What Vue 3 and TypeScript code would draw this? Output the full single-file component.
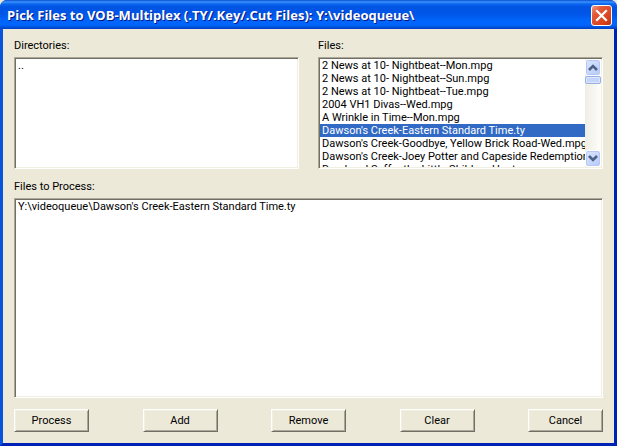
<script setup lang="ts">
import { ref } from 'vue'

const path = 'Y:\\videoqueue\\'
const directories = ['..']
const files = [
  '2 News at 10- Nightbeat--Mon.mpg',
  '2 News at 10- Nightbeat--Sun.mpg',
  '2 News at 10- Nightbeat--Tue.mpg',
  '2004 VH1 Divas--Wed.mpg',
  'A Wrinkle in Time--Mon.mpg',
  "Dawson's Creek-Eastern Standard Time.ty",
  "Dawson's Creek-Goodbye, Yellow Brick Road-Wed.mpg",
  "Dawson's Creek-Joey Potter and Capeside Redemption",
  'Dead and Suffer the Little Children-Hunt.mpg',
]
const selectedDirs = ref<string[]>([])
const selectedFiles = ref<string[]>([files[5]])
const selectedQueue = ref<string[]>([])
const queue = ref<string[]>([path + files[5]])

function add(): void {
  for (const name of selectedFiles.value) {
    if (!queue.value.includes(path + name)) queue.value.push(path + name)
  }
}
function remove(): void {
  queue.value = queue.value.filter((f) => !selectedQueue.value.includes(f))
}
function clear(): void {
  queue.value = []
}

const fileList = ref<HTMLSelectElement | null>(null)
function scrollFiles(rows: number): void {
  fileList.value?.scrollBy(0, rows * 13)
}
</script>

<template>
  <div class="window">
    <header class="titlebar">
      <h1 class="title">Pick Files to VOB-Multiplex (.TY/.Key/.Cut Files): {{ path }}</h1>
      <button class="close" type="button" aria-label="Close">
        <svg viewBox="0 0 21 21" width="21" height="21">
          <defs>
            <linearGradient id="closeFill" x1="0" y1="0" x2="1" y2="1">
              <stop offset="0" stop-color="#f0a088" />
              <stop offset="0.3" stop-color="#e2593a" />
              <stop offset="0.75" stop-color="#d9401a" />
              <stop offset="1" stop-color="#b03010" />
            </linearGradient>
          </defs>
          <rect x="0.5" y="0.5" width="20" height="20" rx="2.5" fill="url(#closeFill)" stroke="#fff" />
          <path d="M6 6 L15 15 M15 6 L6 15" stroke="#fff" stroke-width="2.2" stroke-linecap="square" />
        </svg>
      </button>
    </header>

    <main class="body">
      <div class="pickers">
        <section class="field">
          <label class="label" for="dirs">Directories:</label>
          <div class="sunken">
            <select id="dirs" v-model="selectedDirs" class="list" size="8" multiple>
              <option v-for="d in directories" :key="d" :value="d">{{ d }}</option>
            </select>
          </div>
        </section>
        <section class="field">
          <label class="label" for="files">Files:</label>
          <div class="sunken">
            <select id="files" ref="fileList" v-model="selectedFiles" class="list" size="8" multiple>
              <option v-for="f in files" :key="f" :value="f">{{ f }}</option>
            </select>
            <div class="scrollbar">
              <button class="arrow" type="button" aria-label="Scroll up" @click="scrollFiles(-1)">
                <svg viewBox="0 0 16 17" width="16" height="17">
                  <path d="M4 11 L8 7 L12 11" fill="none" stroke="#4d6185" stroke-width="2.6" />
                </svg>
              </button>
              <div class="thumb"></div>
              <div class="track"></div>
              <button class="arrow" type="button" aria-label="Scroll down" @click="scrollFiles(1)">
                <svg viewBox="0 0 16 17" width="16" height="17">
                  <path d="M4 6 L8 10 L12 6" fill="none" stroke="#4d6185" stroke-width="2.6" />
                </svg>
              </button>
            </div>
          </div>
        </section>
      </div>

      <section class="field">
        <label class="label" for="queue">Files to Process:</label>
        <div class="sunken">
          <select id="queue" v-model="selectedQueue" class="list" size="14" multiple>
            <option v-for="q in queue" :key="q" :value="q">{{ q }}</option>
          </select>
        </div>
      </section>

      <footer class="actions">
        <button class="btn" type="button">Process</button>
        <button class="btn" type="button" @click="add">Add</button>
        <button class="btn" type="button" @click="remove">Remove</button>
        <button class="btn" type="button" @click="clear">Clear</button>
        <button class="btn" type="button">Cancel</button>
      </footer>
    </main>
  </div>
</template>

<style>
body {
  background: #ece9d8;
}
</style>

<style scoped>
.window {
  box-sizing: border-box;
  height: 100vh;
  min-height: 300px;
  display: flex;
  flex-direction: column;
  overflow: hidden;
  border-radius: 7px 7px 0 0;
  background: #0831d9;
  font: 11px/13px Roboto, "Liberation Sans", Arial, sans-serif;
  color: #000;
}
.titlebar {
  flex: none;
  display: flex;
  align-items: center;
  justify-content: space-between;
  box-sizing: border-box;
  height: 29px;
  padding: 2px 5px 0 7px;
  background: linear-gradient(
    #0b4fd0 0,
    #3a93ff 2px,
    #0a66ee 4px,
    #0054e3 7px,
    #0056e8 14px,
    #0064fa 20px,
    #0066ff 25px,
    #0052dc 27px,
    #003fc4 29px
  );
}
.title {
  margin: 0;
  font: bold 13px/17px "Open Sans", "Noto Sans", sans-serif;
  color: #fff;
  text-shadow: 1px 1px #0a1883;
  white-space: nowrap;
}
.close {
  width: 21px;
  height: 21px;
  padding: 0;
  border: 0;
  background: none;
}
.close svg,
.arrow svg {
  display: block;
}
.body {
  flex: 1;
  min-height: 0;
  display: grid;
  grid-template-rows: minmax(0, 130fr) minmax(0, 218fr) auto;
  row-gap: 11px;
  padding: 10px 11px 11px;
  border: 3px solid;
  border-top: 0;
  border-color: #0842e0 #0022b4 #0022b4 #0855dd;
  background: #ece9d8;
}
.pickers {
  display: grid;
  grid-template-columns: minmax(0, 1fr) minmax(0, 1fr);
  grid-template-rows: minmax(0, 1fr);
  column-gap: 19px;
}
.field {
  display: flex;
  flex-direction: column;
  gap: 5px;
  min-height: 0;
}
.sunken {
  flex: 1;
  min-height: 0;
  display: flex;
  padding: 1px;
  border: 1px solid;
  border-color: #aca899 #fff #fff #aca899;
  box-shadow: inset 1px 1px #716f64, inset -1px -1px #f1efe2;
  background: #fff;
}
.list {
  flex: 1;
  min-width: 0;
  margin: 0;
  padding: 0;
  border: 0;
  border-radius: 0;
  outline: 0;
  overflow: hidden;
  background: #fff;
  font: inherit;
  color: #000;
}
.list option {
  min-height: 13px;
  padding: 0 2px;
  line-height: 13px;
}
.list option:checked {
  background: #316ac5;
  color: #fff;
}
.scrollbar {
  flex: none;
  width: 16px;
  display: flex;
  flex-direction: column;
  background: linear-gradient(90deg, #eeede5, #fefefb);
}
.arrow {
  flex: none;
  width: 16px;
  height: 17px;
  padding: 0;
  border: 1px solid #fff;
  border-radius: 3px;
  background: linear-gradient(135deg, #dce6ff, #b5c9f8);
  box-shadow: inset 0 0 0 1px #b4c8f6;
}
.arrow svg {
  margin: -1px;
}
.thumb {
  flex: none;
  box-sizing: border-box;
  height: 8px;
  border: 1px solid #98b1e4;
  border-radius: 2px;
  background: #c4d4fd;
  box-shadow: inset 0 0 0 1px #dde7ff;
}
.track {
  flex: 1;
}
.actions {
  display: flex;
  justify-content: space-between;
}
.btn {
  width: 75px;
  height: 23px;
  padding: 0;
  border: 1px solid;
  border-color: #fff #716f64 #716f64 #fff;
  box-shadow: inset 1px 1px #f1efe2, inset -1px -1px #aca899;
  background: #ece9d8;
  font: inherit;
  color: #000;
}
</style>
